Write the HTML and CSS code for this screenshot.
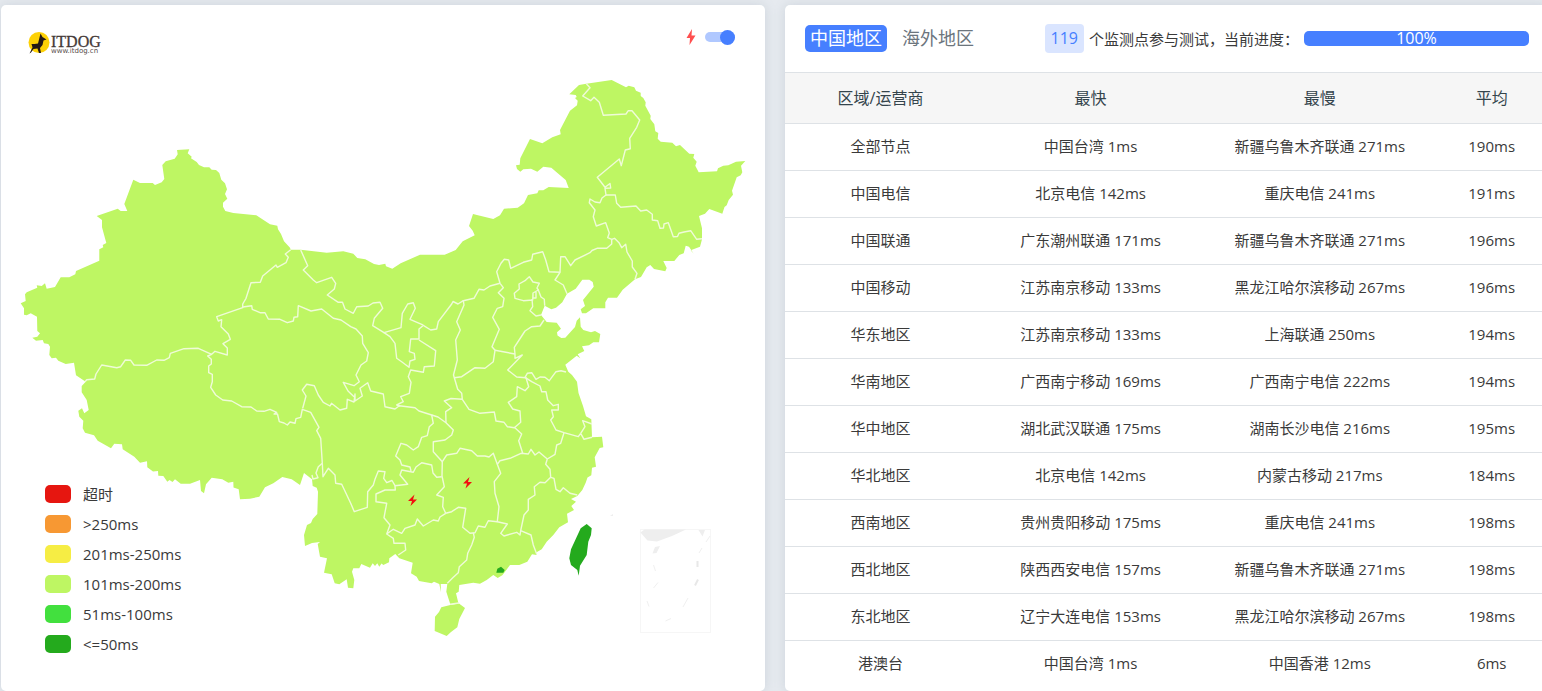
FILE: index.html
```html
<!DOCTYPE html>
<html lang="zh-CN">

<head>
    <meta charset="utf-8">
    <meta name="viewport" content="width=device-width, initial-scale=1.0">
    <title>ITDOG</title>
    <link rel="stylesheet" href="styles.css">
</head>

<body>
    <main class="panels">
        <section class="card map-card">
            <svg class="map" viewBox="1 5 764 686" role="img" aria-label="中国地图">
                <!-- mainland -->
                <path class="land" d="M177 150L189.300 149.300 187.700 153.300 191.700 156.700 191 158.300 196.700 162 199 165 204 167.300 209.300 167.300 211.700 169.700 216 170 219.300 173 221.300 179.700 225 183.300 227 189.300 225 194 227.300 198.700 223 202.700 223 206.700 225.300 211 233.300 213 256.300 215.300 270 224.300 277.300 225.700 278 229.300 281 234 284 241.300 290 247.700 290.700 249.700 300.700 249.700 326.700 252.700 343.300 251.300 353.300 253.700 357.300 258 365.300 259.300 374 264 379 265 385.300 263.700 386 266.300 392.300 268.700 400.700 263.300 420 254.700 444.700 254.700 455.700 250 462.700 241.300 474.700 235.300 472.700 230.700 469 226 473 214 480 215.700 493.300 219 500 215.300 504 208.700 517.700 207.700 524 203.300 528 195 537.300 193.300 538.700 190.300 543.300 190.300 548.700 187 568.700 188 565.700 180 551.300 167.700 543.300 166.700 537.300 171.700 531 168.700 523.300 169.300 520.300 171.700 517 169 516 165.300 519.700 164.700 520.300 158.300 530 139 542.300 143.300 552.300 137.300 560.700 134.300 560 130 570 110.700 577 105.300 577.700 100.700 575 98 576.700 97 575.700 95 569.300 94.300 579 85 586.300 83.700 611.700 80 626 87.300 628.700 85.700 634.300 87.300 636 90.700 640.700 92.700 640.700 96 643.300 98 645.700 102.300 645.300 105.700 650.700 115.700 650.300 119 654.300 124.300 655.300 131.300 658.300 133 657.700 138.700 660.700 141.700 672.300 142.700 676 146.300 680 145 689.300 153.700 694.300 154 693.300 157.700 696.700 161.700 695.300 165.700 698.700 172.300 717 171.300 718 168.300 723.300 165.700 728.300 165.300 736 161.700 745.300 161 741 165.700 742.300 172.300 740.700 175.300 736.700 177.300 732 190.700 733 194.700 728.700 200 726.700 205.300 724.500 207 722.300 213.700 709.300 209 705 213.700 699 216 702 228.300 702 239.300 700 246.700 690.700 250.300 693.700 253.700 689 246.700 685.700 245.700 683.700 253.300 679.300 255 674.300 261 663.300 261 666.700 268 665.300 271.300 654 269 650.300 265 646.700 267.300 641 277 635 279.300 622.700 289.700 617 297.700 608 297.700 605.300 302.300 605.300 308.300 593.300 308.300 586 313.300 582 313.300 580.700 309.300 585 306 583 300 593.700 286.700 592.700 282 589.300 279.700 582.300 279.700 575.700 288.700 567 293.700 562.300 302.300 556 307.700 551.300 309.300 544.700 305.700 541 315 546.700 322 556.700 322.700 561 328.700 557 332.300 557.500 335.500 561.300 338 565.300 337.700 575 327 576.700 320.700 580 317.300 580.700 326.700 583.300 330 591 332.300 595 331 600.300 334 599 342.300 593.300 342.300 589 345.300 582 346.300 584.300 351 577.700 354.300 580.300 358.300 576.700 355.700 565.300 364.700 568.300 371.700 572 375 577 381.700 578.500 393 583 406 584.700 411.700 586 416.300 591.300 419.300 592 437.300 602 436.700 603.300 447.300 599.700 448 594.700 457.300 596 466.700 592 467.700 591.300 475.300 587.500 477.500 585.700 482.700 582.300 490 577.300 496 571 499 576 501.700 571.300 506 574 510 567 513.700 568 522.300 559.300 527.300 553.300 535 546.700 541.700 541.700 549.300 535.700 552.700 536.700 555 532 554.300 527.300 561.700 519.300 565 510 565 505 571.700 502.300 575.300 497.700 578 493.300 575 486.700 580 480 583.700 473.300 582.700 459.300 585 458.700 591.700 456 593.300 458.300 602.700 450.300 604.300 446.300 591.700 447.300 584 440.700 584 441 592.300 439.300 584 434 581.700 431.700 583.300 419 581 416.700 576.700 411 573.300 412.700 562.700 399.300 558.300 395.300 554 389.300 558.300 389 562.300 383.300 565 381.500 563.500 379.300 566.700 377.300 563.300 375 566 372.700 563.300 370 567.700 361.300 564 359.300 568.300 353.300 568.300 352 571.700 354.300 580 353.300 588.300 348 587.700 346.700 579.300 339.300 584.300 334.700 583.300 331.700 574.300 324 572.700 327 558.300 320 556.700 317.700 544 320 542 312 543 305 546 304 535 307 525 311 523 312.700 519 317.300 514 318 491.700 316.700 487.700 312.700 486 312 479.300 304 473 300 485 291.700 479.300 282.300 477 273.300 483.300 265 487.300 259.300 496.700 250 498.700 240 499.300 238.700 489.300 233.500 487.500 233.300 481.700 228.300 482.700 222.300 479.300 211.700 477.700 206 484.300 204 493.300 201 491 200 480 190 483.700 180.700 483.700 175 479.300 172.500 482 169.500 480 167.300 481.700 163.300 476 158.300 475.700 158 471 153 471.500 147.300 467.300 147 461.300 140 462.700 134.300 456.700 122.700 449.300 122 444.300 114.300 443.700 111 448.300 97.700 440.700 94 435.300 85 432.700 82.700 428.300 83.300 420.700 79.300 416.700 78.300 410.700 82 408.300 84.300 413.300 88.700 410 86.700 400 81.700 392.300 81.700 386 85.700 381.700 76 375.300 74 362.700 65.700 364 58.300 360.700 56 357.700 51.700 358.300 49.300 355 50 346.700 48.300 344 44 343.300 42.700 340 36 340.700 32.300 337.700 37.300 336.700 40 333.300 37.300 331 37 316.700 30.700 313.300 26.700 315.300 24 314.700 24 308.300 20.700 303.300 25.700 301 25 294.300 26.700 292.300 37.300 287.700 36.700 285.300 41.700 286 45 283.300 46.700 288.700 55 287 60.700 277.300 69.300 277.300 75.300 274.300 76 271 99.300 260.700 99.300 249.300 103.300 247.300 102.700 245 106.300 243 102 227.300 102 220 96.700 216 117.700 208.700 120.700 211 127.300 211 124.300 204 133.300 179.700 140 183 152.700 183 155 185 161.700 182.300 164.300 179 162.300 165 165.700 161.300 174.700 158.700 177.700 154.300Z" />
                <!-- Hainan -->
                <path class="land" d="M450.300 605L441.300 607.300 439 612 435 616.700 434.700 631 446.700 636 451 632 457.300 627.300 459.300 619 465 608 459 603.500Z" />

                <g class="border">
                    <!-- Xinjiang, Tibet, Qinghai, Gansu -->
                    <path d="M290.700 249.700L285.300 254 288.300 257.300 286 262.700 277.300 267.300 276 265 262.700 276 260.300 282.300 251 282.700 246 298.300 242.700 304 242.700 307.700 216.700 316.700 218.300 321 221.700 319.700 221 326.700 228.300 334 230.300 339.300 223 343.700 227.300 348 227.300 355 215 351.300 211.700 354.300 198.300 348.300 184 348.700 170.300 353.300 169.300 357.700 164 360.300 156.700 360 146.700 365.300 134 365 130.700 360.300 125.300 360 120.700 366.700 116.700 367.700 101.700 365 96 374 94.700 379 86.700 379.700 85 381.700" />
                    <path d="M211.700 354.300L207.700 356 211.300 359.300 211.300 364 208.700 366 208.700 372.700 212.300 374.300 212.300 381.700 210.700 387.300 215.700 395 222.700 400 231.700 401 241.700 406.700 251 407 256.700 411 264 411.300 270 409.300 276.700 412.300 274 414 277.500 414 279.300 421.700 284 423 287.300 425 290 422 295 423.300 296 418.700 300.700 417.300 302.300 409.300 310.700 412.300 319 427.300 316.700 430.700 320.700 438.300 322.300 463.300 318.300 466.700 316 473 318 477.700 313 479 312 475" />
                    <path d="M354 396.700L348 391 343.300 382.300 354 385.700 359.300 381.700 356 375 361 365 366.700 361 368.300 352.700 362.700 343.300 362.300 336 356 329 350.700 326.700 341 320 333.300 318.300 321.700 309 311 311 298.300 305.700 297.700 316.700 294 317.300 293.300 321 287.300 322.700 280 319.300 268.300 319 265 312.700 260 312.700 252.300 309.300 251.700 305.700 242.700 307" />
                    <path d="M302.700 408.300L306 396 302.300 390 306.700 384.300 314.300 385.700 318.300 395 323.300 402.300 330 406 331.500 403.300 340 410 346.700 408.300 347.300 399.300 354 402 355 394 355 401 362.300 396 360 388.300 367.700 382.700 370.700 391 383.300 394 385 406.700 395 409 399.300 405.700 415 407.700 419 411 431.700 415 433.300 423.300 429.300 426.700 427.300 435.700 421.700 437.300 418.300 446.700 413.300 450 406.700 445 401 443.300 395.700 456 400 460 401.700 465 410 467 411 471" />
                    <!-- Inner Mongolia south edge, Ningxia -->
                    <path d="M300.700 250L307.700 265.700 303.300 270 313.300 280 316.700 282.700 331.700 277.300 335.700 283.300 334.300 289 327.300 295 338.300 302.300 342.500 302.300 345 309 353.300 313.300 356.700 306.700 368.300 306 373 303 380 302.300 382.700 308.300 374.300 318.300 372.700 325.700 384 332.700 401 327.700 402.300 313.300 407.700 304 413.300 302.700 415.300 308.300 410 319.300 421.700 324.300 430.700 330 436.700 329 438.300 321.700 451.700 304 453 301.500 458 304 463.300 300.700 474 298.300 479 289.300 484 290 490 286 500 283.300" />
                    <path d="M384 332.700L390 336.700 395 343.300 396.700 358.300 402 362 409 367.300 410 361 415 359.300 414.300 353.300 409.300 351.700 410.700 339 419 339 419 329 422.700 326M419 340L435.700 350.700 434.300 366 424.300 366.700 423.300 372.300 410.700 370 408.300 376.700 411 382.300 409.300 393.300 400.700 396.700 403.300 401.700 396.700 405 400 406" />
                    <!-- Shaanxi, Shanxi, Hebei, Henan -->
                    <path d="M463.300 300.700L464 305 456.700 321.700 460.300 330 455.700 340 457.300 360 453.500 375 457.700 389.300 461.700 393.300 462.300 399.300 451 398.500 444.300 401 451.700 407.700 445.700 411.700 446 422.700" />
                    <path d="M454.300 377.700L461.700 376.700 475 367.700 485 368.300 493.300 361.700 495 350.300 492 346.700 499.300 329.300 492.700 317.300 497.300 308.300 502.700 306.700 504 298.300 498.300 292.700 503.300 287.700 500 283.300 496.700 271.700 501 263.300 504.300 259.300 508.700 260 510.700 268.300 523.300 262.300 531.700 260 532.700 254.300 542.700 251.700 545.700 260 549 271.700 560 272.300 555 280 563.300 285 567 293.700" />
                    <path d="M495 350.300L515 354 514.300 347.300 521.700 336 525 331 531.700 326.700 540 326 544 320M515 354L515 358.300 522.300 355 507.700 370 516.700 377 526 377.700 528.700 386.700 525 390.700 517.300 386.700 516.700 396.700 508.300 402.300 512.700 409 520 411 520.700 422.300 514.300 427.700 507.300 426.700 504 422.300 496 421 494.300 412 480 413.300 469 409.300 462.300 399.300" />
                    <path d="M529.300 276.700L533 282 539.300 283.300 537 288 538.300 290 533 293 532.700 300 523.300 300.700 515 298.300 514.300 293.300 519.300 289 519 284 525 280.700ZM538.300 290L541 297 544.300 299.300 544.700 305.700M532 299L532.700 306.700 530 310.700 536 316 541 315M533 293L533 298 536 298 536 292" />
                    <!-- north-east -->
                    <path d="M560 272.300L560.700 256.700 565 256.700 570.700 265.700 575 260 590 252.700 592 250.500 597 248.300 606.700 248.300 611.700 244 611.700 239.300 607.700 237.700 609.300 233 605.700 222.700 596.300 226 593.300 216.700 595 210 589.300 202.700 590 199 595 202 600 202.700 602 198 606 195 605 188.300 610.700 188 610 183.500 605 187.300 597.300 177.300 619.300 159 621.300 165.700 625.300 150 630.300 148.700 629.700 138.300 636.700 127.300 639.700 120 632 110.700 628.300 110.700 626 114 603.300 115.300 599.300 102.300 594 97.300 590.700 100.700 582.700 96 590 87.700 586.300 83.700" />
                    <path d="M606 195L615.300 195 616.700 203.300 620.700 207.300 636 206 640.700 211 646.700 210 652.300 214.300 652.300 220 657.700 220.700 660 228.300 663.500 228 664 224 668.300 222.700 673.300 236.700 677.500 236.500 679 233.300 684 232 690.700 230.700 696.700 239.300 702 238.700M611.700 239.300L614.500 238.300 619 242.700 621.700 247.700 625.700 244.300 627 252 632.300 261 632.300 267 637 273.300 635 279.300" />
                    <!-- Shandong, Jiangsu, Anhui, Shanghai -->
                    <path d="M525 377.300L527.300 373.300 531.700 372.700 536 379.300 540 377 545 377.300 549.300 380.700 556 371.700 561 370.700 566 372M525 377.300L531.700 381.700 540 386 541.700 391.700 546 391.700 547.700 400 553.300 405.700 558.300 404.300 558.300 410 551.700 410 553.300 416.700 550.700 420 556 430 564 432.700 578.300 436.700 580.700 433.300 585 426.700 582.700 420.700 592 424M580.700 433.300L584 439.300 592 437.300" />
                    <path d="M514.300 427.300L521.700 434 518.700 440.700 522.700 453.300M564 432.700L560.700 443.300 556.700 445 555 454.300 547.300 459 545.700 464.300 550 469.300 550.700 477.300 554 478.300 556 489.300 560 491.700 563.300 487.700 570 493.300 577.300 495" />
                    <!-- Chongqing, Hubei, Hunan, Jiangxi -->
                    <path d="M431.700 415L438 417 446 422.700 453.300 430 451.700 435 445 440 433.300 441.700 433.300 451.700 442.300 461.700 446.700 455 456.700 453.300 460 448.300 471.700 450.700 477.300 456 485 456 489 457 493.300 453.300 497.300 464.300 500 460.700 510 458.300 521 453.300 528.300 454 531 449.300 535 455 539 452 547.300 459" />
                    <path d="M497.300 464.300L500.700 473.300 494.300 481.700 495 493.300 499 506.700 497.300 521.700 507.300 524 500.700 533.300 504 536 516.700 532.300 520 535 520.700 530.700 524 515 528.300 510 528.300 499.300 535 495 534.300 486.700 540 482.300 545 482.700 550.700 477.300M520.700 530.700L531 535 533.300 545 536.700 554" />
                    <path d="M442.300 461.700L442 476 444.300 486.700 436.700 495 443.300 497.300 442.700 506.700 445.700 513.300 451.700 511.700 458.300 507.300 465.700 508.300 462.700 527.300 470 533.300 475 532.700 478.300 526 485 527.300 488.300 520.700 497.300 521.700" />
                    <!-- Yunnan, Guizhou, Guangxi -->
                    <path d="M322.300 463.300L323 476.700 328.300 468.300 335 475 335.700 483.300 341.700 484.300 350.700 503.300 354.300 511.700 367.300 507.300 367.700 491.700 373.300 485 375 479.300 378.300 471 385 471.700 383.700 478.300 386.700 482.700 392 480.500 395 485.700 407.700 484.300 400 475 401.700 470 413.300 472.300 416 467 421.700 462.700 431.700 465 433 473 436.700 477.300 441.700 476.700" />
                    <path d="M395 485.700L395.300 490 385 490 376 494 376 501.700 386.700 503.300 384 517.700 390 525 386.700 534 393.300 538.300 394 543.300 405 543.300 405.700 550 398.300 555M386.700 534L393.300 529.300 401.700 533.300 405 528.300 415 525 417.300 519 423.300 526 433.300 520 438.300 521 440 517 445.700 513.300M473.300 532.700L474.300 537.300 471.700 545 467.700 553.300 466.700 560 459.300 566.700 458.300 572.700 453.300 577.300 447.300 583.300M450 604.300L459 603" />
                </g>

                <!-- Hong Kong and Taiwan -->
                <path class="fast" d="M496.300 572.700L497.300 568.700 501 566.700 504.700 570 503.300 572.700Z" />
                <path class="fast" d="M586.700 524L591.700 528.300 591 535 588.300 541.700 586.700 555 580 565.700 578.700 575.700 577.300 570 571 565 569.300 558.300 571 549.300 580.700 528.300Z" />

                <!-- South China Sea inset -->
                <rect class="inset-frame" x="640.500" y="529.500" width="70" height="103" />
                <path class="inset-land" d="M640.500 532.500L644.500 529.500H686L672 536 657 541.500 647.500 540.500ZM698.500 530H705L702.500 536.500ZM655 547L660 546 656.500 553 652.500 553.500ZM610 516L613 514V516Z" />
                <path class="inset-dash" d="M697.500 561V567M698 579.500L695 585.500" />
                <path class="inset-dash thin" d="M710 536L706 542M702 548L699 553M688 598L683 607M671 618.500L665.500 621M647 601L649 606.500M658 582.500L653.500 588M653.500 565L655.500 571" />

                <path class="bolt" d="M414.500 494.500L408 501H412L410.500 506 417 499.500H413Z" />
                <path class="bolt" d="M469.500 477L463 483.500H467L465.500 488.500 472 482H468Z" />
            </svg>

            <a class="logo" href="#" aria-label="ITDOG">
                <svg width="76" height="26" viewBox="0 0 76 26">
                    <circle cx="11" cy="12.500" r="10.500" fill="#fdd106" />
                    <path d="M12.500 3.500L14.500 7 18.500 9.500 15.500 10.500 14.500 15 12 18 13 23H11L9.500 18.500 5.500 19 3 22.500 1.500 23.500 4.500 17.500 3.500 14 6.500 14 10 13.500Z" fill="#231815" />
                    <text class="logo-name" x="23" y="17">ITDOG</text>
                    <text class="logo-site" x="23" y="23">www.itdog.cn</text>
                </svg>
            </a>

            <label class="flash-switch">
                <svg width="10" height="16" viewBox="0 0 10 16" aria-hidden="true">
                    <path d="M6 0L0.500 9H4L3.500 16 9.500 6.500H5.500Z" fill="#ff4f4f" />
                </svg>
                <input type="checkbox" aria-label="闪电" checked>
            </label>

            <ul class="legend">
                <li><span class="swatch timeout"></span>超时</li>
                <li><span class="swatch over250"></span>&gt;250ms</li>
                <li><span class="swatch to250"></span>201ms-250ms</li>
                <li><span class="swatch to200"></span>101ms-200ms</li>
                <li><span class="swatch to100"></span>51ms-100ms</li>
                <li><span class="swatch to50"></span>&lt;=50ms</li>
            </ul>
        </section>

        <section class="card">
            <header class="card-header">
                <div class="tabs">
                    <button class="tab active" type="button">中国地区</button>
                    <button class="tab" type="button">海外地区</button>
                </div>
                <div class="status">
                    <span class="badge">119</span>
                    <span class="status-text">个监测点参与测试，当前进度：</span>
                    <div class="progress" role="progressbar" aria-valuenow="100" aria-valuemin="0" aria-valuemax="100">
                        <div class="progress-bar" style="width: 100%">100%</div>
                    </div>
                </div>
            </header>
            <table class="results">
                <thead>
                    <tr>
                        <th class="col-area">区域/运营商</th>
                        <th class="col-node">最快</th>
                        <th class="col-node">最慢</th>
                        <th class="col-avg">平均</th>
                    </tr>
                </thead>
                <tbody>
                    <tr><td>全部节点</td><td>中国台湾 1ms</td><td>新疆乌鲁木齐联通 271ms</td><td>190ms</td></tr>
                    <tr><td>中国电信</td><td>北京电信 142ms</td><td>重庆电信 241ms</td><td>191ms</td></tr>
                    <tr><td>中国联通</td><td>广东潮州联通 171ms</td><td>新疆乌鲁木齐联通 271ms</td><td>196ms</td></tr>
                    <tr><td>中国移动</td><td>江苏南京移动 133ms</td><td>黑龙江哈尔滨移动 267ms</td><td>196ms</td></tr>
                    <tr><td>华东地区</td><td>江苏南京移动 133ms</td><td>上海联通 250ms</td><td>194ms</td></tr>
                    <tr><td>华南地区</td><td>广西南宁移动 169ms</td><td>广西南宁电信 222ms</td><td>194ms</td></tr>
                    <tr><td>华中地区</td><td>湖北武汉联通 175ms</td><td>湖南长沙电信 216ms</td><td>195ms</td></tr>
                    <tr><td>华北地区</td><td>北京电信 142ms</td><td>内蒙古移动 217ms</td><td>184ms</td></tr>
                    <tr><td>西南地区</td><td>贵州贵阳移动 175ms</td><td>重庆电信 241ms</td><td>198ms</td></tr>
                    <tr><td>西北地区</td><td>陕西西安电信 157ms</td><td>新疆乌鲁木齐联通 271ms</td><td>198ms</td></tr>
                    <tr><td>东北地区</td><td>辽宁大连电信 153ms</td><td>黑龙江哈尔滨移动 267ms</td><td>198ms</td></tr>
                    <tr><td>港澳台</td><td>中国台湾 1ms</td><td>中国香港 12ms</td><td>6ms</td></tr>
                </tbody>
            </table>
        </section>
    </main>
</body>

</html>
```

FILE: styles.css
```css
* {
    box-sizing: border-box;
}

body {
    margin: 0;
    overflow-x: hidden;
    background-color: #e6eaef;
    color: #3a3a3a;
    font-family: "Open Sans", "Noto Sans CJK SC", sans-serif;
    font-size: 15px;
    line-height: 22px;
}

.panels {
    display: grid;
    grid-template-columns: 1fr 1fr;
    gap: 20px;
    margin: 0 -7px 0 1px;
    padding-top: 5px;
}

.card {
    background-color: #fff;
    border-radius: 5px;
    box-shadow: 0 0 12px rgba(105, 125, 145, 0.2);
}

/* MAP */

.map-card {
    position: relative;
}

.map {
    display: block;
    width: 100%;
}

.land {
    fill: #bef663;
}

.fast {
    fill: #24aa1d;
}

.border path {
    fill: none;
    stroke: #effbd8;
    stroke-width: 1.4px;
    stroke-linejoin: round;
}

.inset-frame {
    fill: none;
    stroke: #f6f6f6;
}

.inset-land {
    fill: #eee;
}

.inset-dash {
    stroke: #e8e8e8;
    stroke-width: 2px;
}

.thin {
    stroke: #f0f0f0;
    stroke-width: 1px;
}

.bolt {
    fill: #f10f0f;
}

.logo {
    position: absolute;
    top: 25px;
    left: 27px;
}

.logo svg {
    display: block;
}

.logo-name {
    fill: #453a38;
    stroke: #453a38;
    stroke-width: 0.3px;
    font-family: "Liberation Serif", serif;
    font-size: 16px;
}

.logo-site {
    fill: #554b49;
    font-family: "DejaVu Sans", sans-serif;
    font-size: 7px;
}

.flash-switch {
    position: absolute;
    top: 24px;
    right: 30px;
    display: flex;
    align-items: center;
    gap: 9px;
    cursor: pointer;
}

.flash-switch input {
    appearance: none;
    display: flex;
    align-items: center;
    width: 30px;
    height: 10px;
    margin: 0;
    border-radius: 5px;
    background-color: #d5d9e0;
    cursor: pointer;
}

.flash-switch input::before {
    content: "";
    width: 15px;
    height: 15px;
    border-radius: 50%;
    background-color: #fff;
}

.flash-switch input:checked {
    justify-content: flex-end;
    background-color: #b0c8ff;
}

.flash-switch input:checked::before {
    background-color: #467fff;
}

.legend {
    position: absolute;
    bottom: 36px;
    left: 44px;
    display: grid;
    gap: 8px;
    margin: 0;
    padding: 0;
    list-style: none;
}

.legend li {
    display: flex;
    align-items: center;
    gap: 12px;
}

.swatch {
    width: 26px;
    height: 18px;
    border-radius: 5px;
}

.timeout {
    background-color: #e61610;
}

.over250 {
    background-color: #f79833;
}

.to250 {
    background-color: #f6ed44;
}

.to200 {
    background-color: #bef663;
}

.to100 {
    background-color: #42e03e;
}

.to50 {
    background-color: #24aa1d;
}

/* RESULTS */

.card-header {
    display: flex;
    justify-content: space-between;
    align-items: center;
    height: 67px;
    padding: 0 20px;
}

.tabs {
    display: flex;
    gap: 10px;
}

.tab {
    padding: 0 5px;
    border: 0;
    border-radius: 5px;
    background: none;
    color: #6c757d;
    font-family: inherit;
    font-size: 18px;
    line-height: 27px;
    cursor: pointer;
}

.tab.active {
    background-color: #467fff;
    color: #fff;
}

.status {
    display: flex;
    align-items: center;
    gap: 5px;
}

.badge {
    padding: 0 6px;
    border-radius: 4px;
    background-color: #dae5ff;
    color: #467fff;
    font-size: 16px;
    line-height: 29px;
}

.status-text {
    white-space: nowrap;
}

.progress {
    width: 225px;
    border-radius: 5px;
    background-color: #e9ecef;
}

.progress-bar {
    border-radius: 5px;
    background-color: #467fff;
    color: #fff;
    font-size: 16px;
    line-height: 15px;
    text-align: center;
}

.results {
    width: 100%;
    table-layout: fixed;
    border-collapse: separate;
    border-spacing: 0;
    text-align: center;
}

.results th {
    padding: 14px 0;
    border-top: 1px solid #dee2e6;
    border-bottom: 1px solid #dee2e6;
    background-color: #f6f6f6;
    color: #34444c;
    font-size: 16px;
    font-weight: 400;
}

.results td {
    padding: 11px 0 13px;
    border-bottom: 1px solid #dee2e6;
}

.results tbody tr:last-child td {
    border-bottom: 0;
}

.col-area {
    width: 25%;
}

.col-node {
    width: 30%;
}

.col-avg {
    width: 15%;
}
```
